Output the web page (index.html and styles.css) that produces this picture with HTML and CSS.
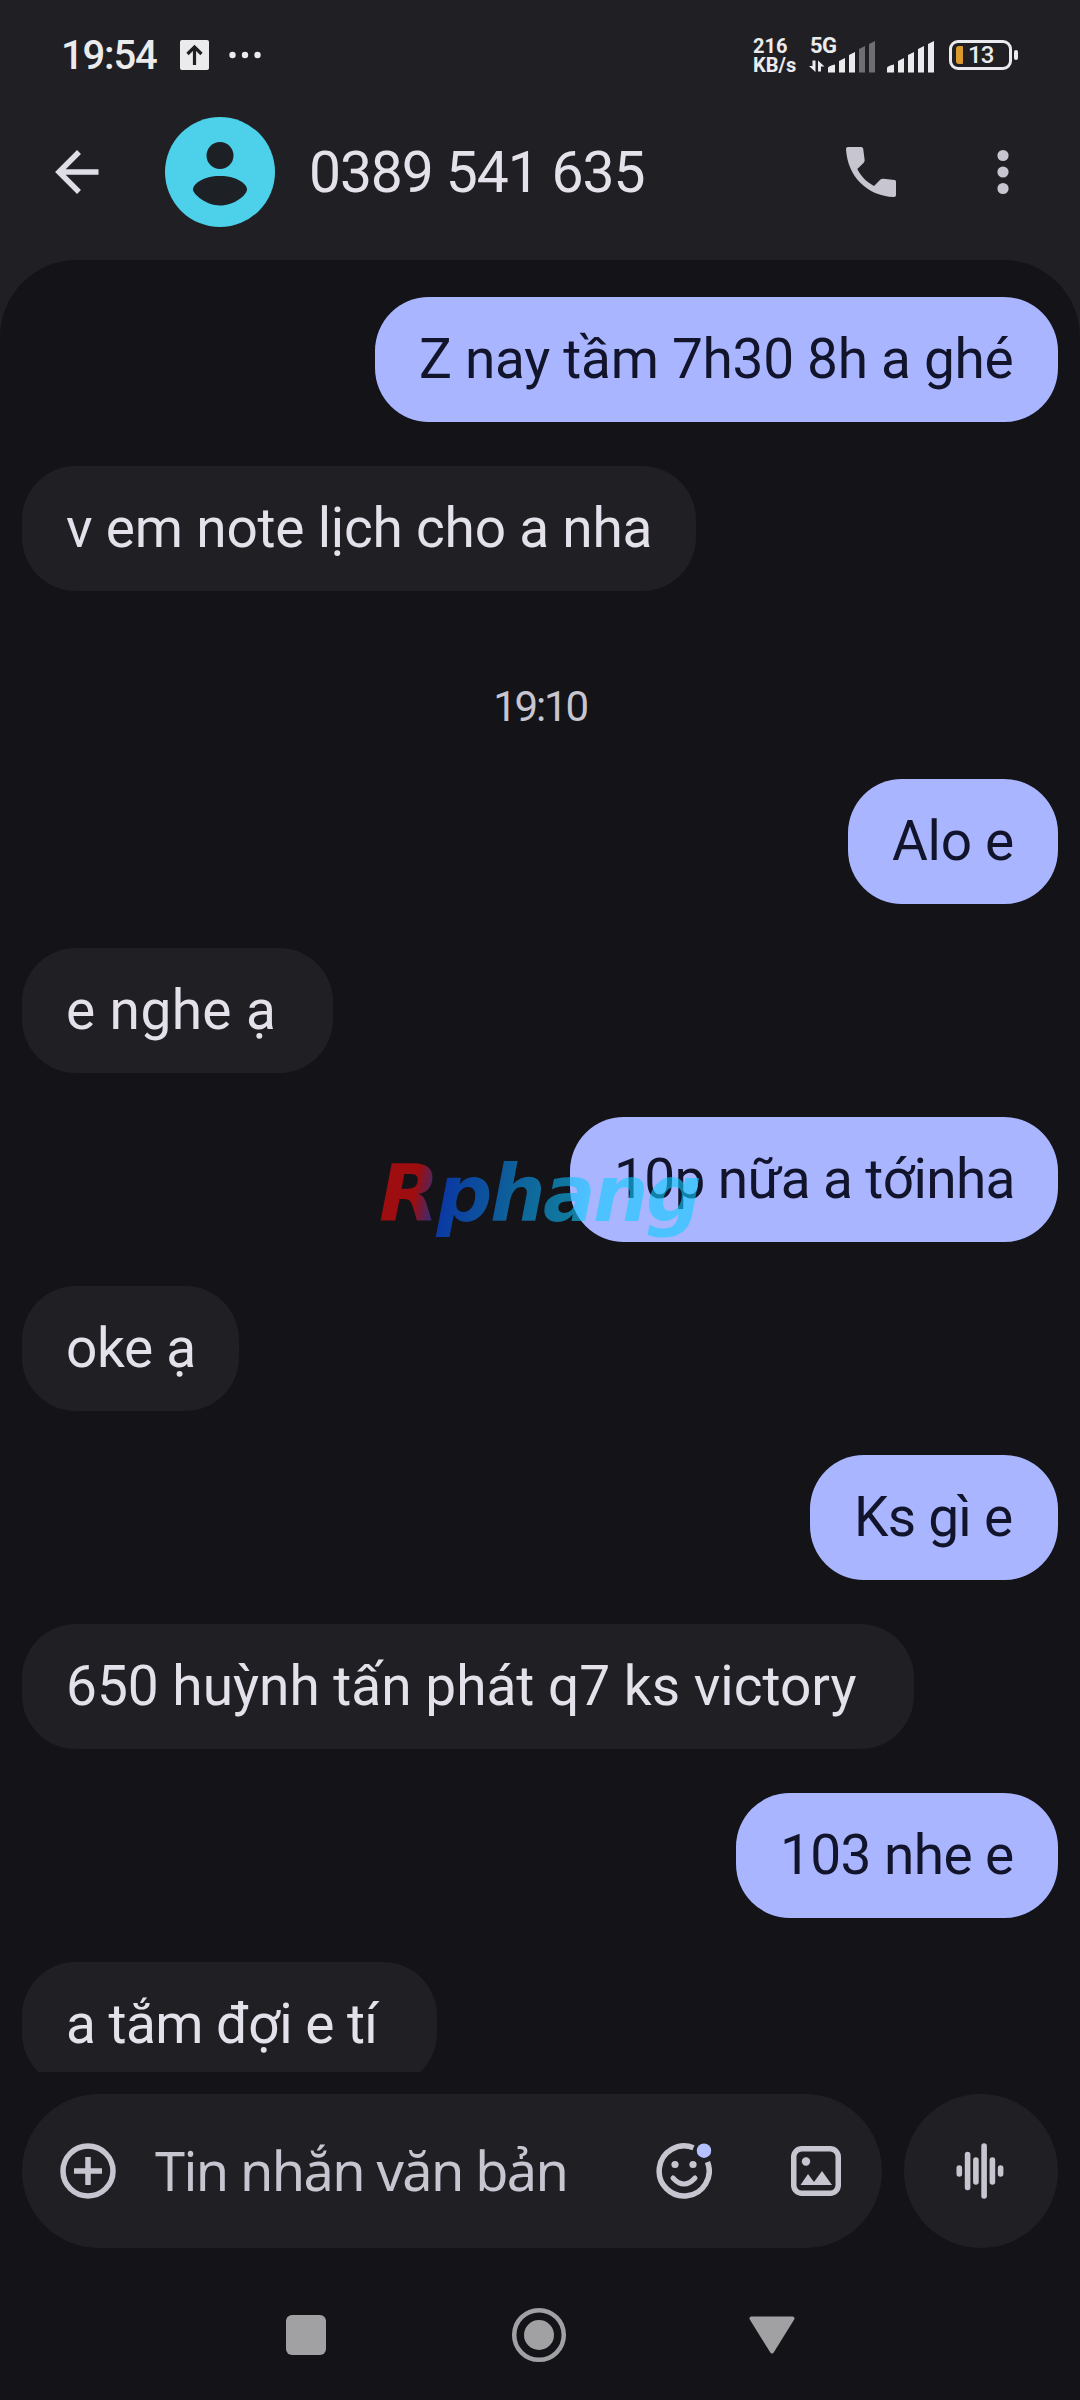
FILE: index.html
```html
<!DOCTYPE html>
<html lang="vi">
<head>
<meta charset="utf-8">
<title>0389 541 635</title>
<link rel="stylesheet" href="styles.css">
</head>
<body>
<div class="phone">
  <header class="top">
    <div class="status">
      <span class="clock">19:54</span>
      <svg class="upload" width="29" height="30" viewBox="0 0 29 30"><rect width="29" height="30" rx="2" fill="#ebebed"/><path d="M14.500 25V8M7.500 14l7-7 7 7" fill="none" stroke="#202024" stroke-width="3.200"/></svg>
      <svg class="more" width="32" height="8" viewBox="0 0 32 8" fill="#ebebed"><circle cx="3.500" cy="4" r="3.200"/><circle cx="16" cy="4" r="3.200"/><circle cx="28.500" cy="4" r="3.200"/></svg>
      <span class="speed">216<br>KB/s</span>
      <span class="cell">
        <span class="net">5G</span>
        <svg width="67" height="36" viewBox="0 0 67 36" fill="#ebebed"><path d="M3.500 23.500h3V35L0 29h3.500zM9 34.500V23.500l6.500 6H12v5zM19 31q0-2 7-3.500v8h-7zM30 24l6-3v14.500h-6zM40 18l6-3v20.500h-6z"/><path d="M50 12l6-3v26.500h-6zM60 7l6-3v31.500h-6z" fill="#6f6f73"/></svg>
      </span>
      <svg class="cell2" width="49" height="36" viewBox="0 0 49 36" fill="#ebebed"><path d="M0 31q0-2 7-3.500v8H0zM11 24l6-3v14.500h-6zM21 18l6-3v20.500h-6zM31 12l6-3v26.500h-6zM41 7l6-3v31.500h-6z"/></svg>
      <span class="battery"><span class="charge"></span><span class="level">13</span></span>
      <span class="cap"></span>
    </div>
    <div class="bar">
      <svg class="back" width="44" height="44" viewBox="0 0 44 44" fill="none" stroke="#dfdde6" stroke-width="5.500"><path d="M43.500 22H4M24 2L4 22l20 20"/></svg>
      <svg class="avatar" width="110" height="110" viewBox="0 0 110 110"><circle cx="55" cy="55" r="55" fill="#4dd0e9"/><g fill="#1d2126"><circle cx="55" cy="38.500" r="13.500"/><path d="M28 72.500C28 67 38 59 55 59s27 8 27 13.500S69 88.500 55 88.500 28 77 28 72.500z"/></g></svg>
      <h1 class="name">0389 541 635</h1>
      <svg class="call" width="50" height="50" viewBox="3 3 18 18" fill="#c7c5d0"><path d="M20.500 14.900l-4-.5c-.5-.05-.9.1-1.200.4l-2.200 2.200C10.200 15.500 8.500 13.700 7.050 10.950l2.250-2.200c.3-.3.45-.7.400-1.150L9.200 3.700C9.150 3.300 8.900 3 8.400 3H3.700C3.300 3 3 3.300 3 3.700 3.500 13.500 10.500 20.600 20.300 21c.4 0 .7-.3.700-.7v-4.700c0-.4-.2-.65-.5-.7z"/></svg>
      <svg class="menu" width="12" height="46" viewBox="0 0 12 46" fill="#c7c5d0"><circle cx="6" cy="6.500" r="5.600"/><circle cx="6" cy="23" r="5.600"/><circle cx="6" cy="39.500" r="5.600"/></svg>
    </div>
  </header>
  <main class="thread">
    <p class="msg sent w1">Z nay tầm 7h30 8h a ghé</p>
    <p class="msg got w2">v em note lịch cho a nha</p>
    <time class="stamp">19:10</time>
    <p class="msg sent w3">Alo e</p>
    <p class="msg got w4">e nghe ạ</p>
    <p class="msg sent w5">10p nữa a tớinha</p>
    <p class="msg got w6">oke ạ</p>
    <p class="msg sent w7">Ks gì e</p>
    <p class="msg got w8">650 huỳnh tấn phát q7 ks victory</p>
    <p class="msg sent w9">103 nhe e</p>
    <p class="msg got w10">a tắm đợi e tí</p>
  </main>
  <div class="composer">
    <div class="field">
      <svg width="56" height="56" viewBox="0 0 56 56" fill="none" stroke="#c7c5d0" stroke-width="5.500"><circle cx="28" cy="28" r="25"/><path d="M28 14v28M14 28h28"/></svg>
      <span class="hint">Tin nhắn văn bản</span>
      <svg class="emoji" width="56" height="56" viewBox="0 0 56 56"><path d="M37.500 4.800A25 25 0 1 0 51.500 19" fill="none" stroke="#c7c5d0" stroke-width="5.500"/><path d="M17 35q11 12 22 0" fill="none" stroke="#c7c5d0" stroke-width="5" stroke-linecap="round"/><g fill="#c7c5d0"><circle cx="19" cy="21.500" r="3.600"/><circle cx="37" cy="21.500" r="3.600"/></g><circle cx="48" cy="7.700" r="7.200" fill="#b6c2ff"/></svg>
      <svg class="photo" width="50" height="50" viewBox="0 0 50 50"><rect x="2.750" y="2.750" width="44.500" height="44.500" rx="8" fill="none" stroke="#c7c5d0" stroke-width="5.500"/><g fill="#c7c5d0"><circle cx="15" cy="15.500" r="4.200"/><path d="M9.500 39l7.500-11 6 8 8-11 10 14z"/></g></svg>
    </div>
    <div class="voice"><svg width="48" height="56" viewBox="0 0 48 56" stroke="#c7c5d0" stroke-width="5.600" stroke-linecap="round"><path d="M3.300 25v6M11.600 11.500v33M19.900 17v22M28.100 3v50M36.400 17v22M44.600 25v6"/></svg></div>
  </div>
  <nav class="nav">
    <svg width="40" height="40" viewBox="0 0 40 40"><rect width="40" height="40" rx="6" fill="#a1a1a3"/></svg>
    <svg width="56" height="56" viewBox="0 0 56 56"><circle cx="28" cy="28" r="24.800" fill="none" stroke="#a1a1a3" stroke-width="4.500"/><circle cx="28" cy="28" r="15" fill="#a1a1a3"/></svg>
    <svg width="46" height="38" viewBox="0 0 46 38"><path d="M2.500 2.500h41L23 35.500z" fill="#a1a1a3" stroke="#a1a1a3" stroke-width="4" stroke-linejoin="round"/></svg>
  </nav>
  <div class="watermark">Rphang</div>
</div>
</body>
</html>
```
FILE: styles.css
```css
* { box-sizing: border-box; }
body { margin: 0; background: #141318; font-family: Roboto, "Noto Sans", sans-serif; }
.phone { position: relative; width: 1080px; height: 2400px; display: flex; flex-direction: column; overflow: hidden; background: #202024; }
.phone svg { display: block; flex: none; }

.top { height: 260px; color: #ebebed; }
.status { display: flex; align-items: center; height: 110px; padding-left: 61px; }
.clock { width: 119px; font-size: 40px; font-weight: 500; letter-spacing: -1.2px; }
.more { margin-left: 20px; }
.speed { width: 56px; margin-left: 492px; font-size: 20px; line-height: 19px; font-weight: 700; padding-top: 2px; }
.cell { position: relative; width: 67px; margin-right: 11px; }
.net { position: absolute; left: 1px; top: -3px; font-size: 22px; line-height: 24px; font-weight: 700; letter-spacing: -.5px; }
.cell2 { margin-right: 13px; }
.battery { display: flex; align-items: center; width: 63px; height: 30px; border: 3px solid #ebebed; border-radius: 9px; padding-left: 4px; }
.charge { width: 7px; height: 18px; border-radius: 3px 1px 1px 3px; background: #dc9a2e; }
.level { margin-left: 5px; font-size: 24px; font-weight: 500; line-height: 24px; letter-spacing: -1px; }
.cap { width: 4px; height: 10px; margin-left: 2px; border-radius: 2px; background: #ebebed; }
.bar { display: flex; align-items: center; height: 124px; padding-left: 55px; }
.avatar { margin-left: 66px; }
.name { flex: none; width: 537px; margin: 0 0 0 34px; padding-top: 2px; font-size: 57px; font-weight: 400; letter-spacing: -1.1px; line-height: 66px; color: #e4e1ea; }
.call { margin-right: 101px; }

.thread { height: 1812px; flex: none; display: flex; flex-direction: column; gap: 44px; padding: 37px 22px 0; overflow: hidden; border-radius: 77px 77px 0 0; background: #141318; }
.msg { flex: none; height: 125px; margin: 0; padding: 0 44px; border-radius: 54px; font-size: 55px; line-height: 125px; white-space: nowrap; }
.sent { align-self: flex-end; background: #a9b6ff; color: #11142a; }
.got { align-self: flex-start; background: #202024; color: #e4e1ea; }
.stamp { flex: none; height: 100px; align-self: center; font-size: 42px; line-height: 144px; letter-spacing: -2.2px; color: #c7c5d0; }
.w1 { width: 683px; letter-spacing: -.3px; }
.w2 { width: 674px; letter-spacing: -.22px; }
.w3 { width: 210px; letter-spacing: -.3px; }
.w4 { width: 311px; letter-spacing: .4px; }
.w5 { width: 488px; letter-spacing: -.65px; }
.w6 { width: 217px; letter-spacing: -.3px; }
.w7 { width: 248px; letter-spacing: -.8px; }
.w8 { width: 892px; }
.w9 { width: 322px; letter-spacing: -.6px; }
.w10 { width: 415px; letter-spacing: -.55px; }

.composer { flex: none; height: 188px; display: flex; gap: 22px; padding: 22px 22px 12px; background: #141318; }
.field { display: flex; align-items: center; width: 860px; height: 154px; padding-left: 38px; border-radius: 77px; background: #202024; }
.hint { width: 501px; margin-left: 39px; padding-bottom: 2px; font-family: "Noto Sans", sans-serif; font-size: 54px; font-weight: 400; letter-spacing: -1.6px; color: #c7c5d0; white-space: nowrap; }
.photo { margin-left: 79px; }
.voice { display: flex; align-items: center; justify-content: center; width: 154px; height: 154px; padding-right: 3px; border-radius: 50%; background: #202024; }
.nav { flex: 1; display: flex; align-items: center; gap: 185px; padding: 10px 0 0 286px; background: #141318; }
.nav svg:last-child { margin-left: -3px; }

.watermark { position: absolute; left: 379px; top: 1149px; font-family: "DejaVu Sans", sans-serif; font-size: 78px; font-weight: 700; font-style: italic; line-height: 90px; letter-spacing: -2.500px; opacity: .6; color: transparent; background: linear-gradient(100deg, #fa0a0a 13%, #0555ff 22%, #0b96f0 42%, #0fcbff 65%); background-clip: text; -webkit-background-clip: text; }
```
